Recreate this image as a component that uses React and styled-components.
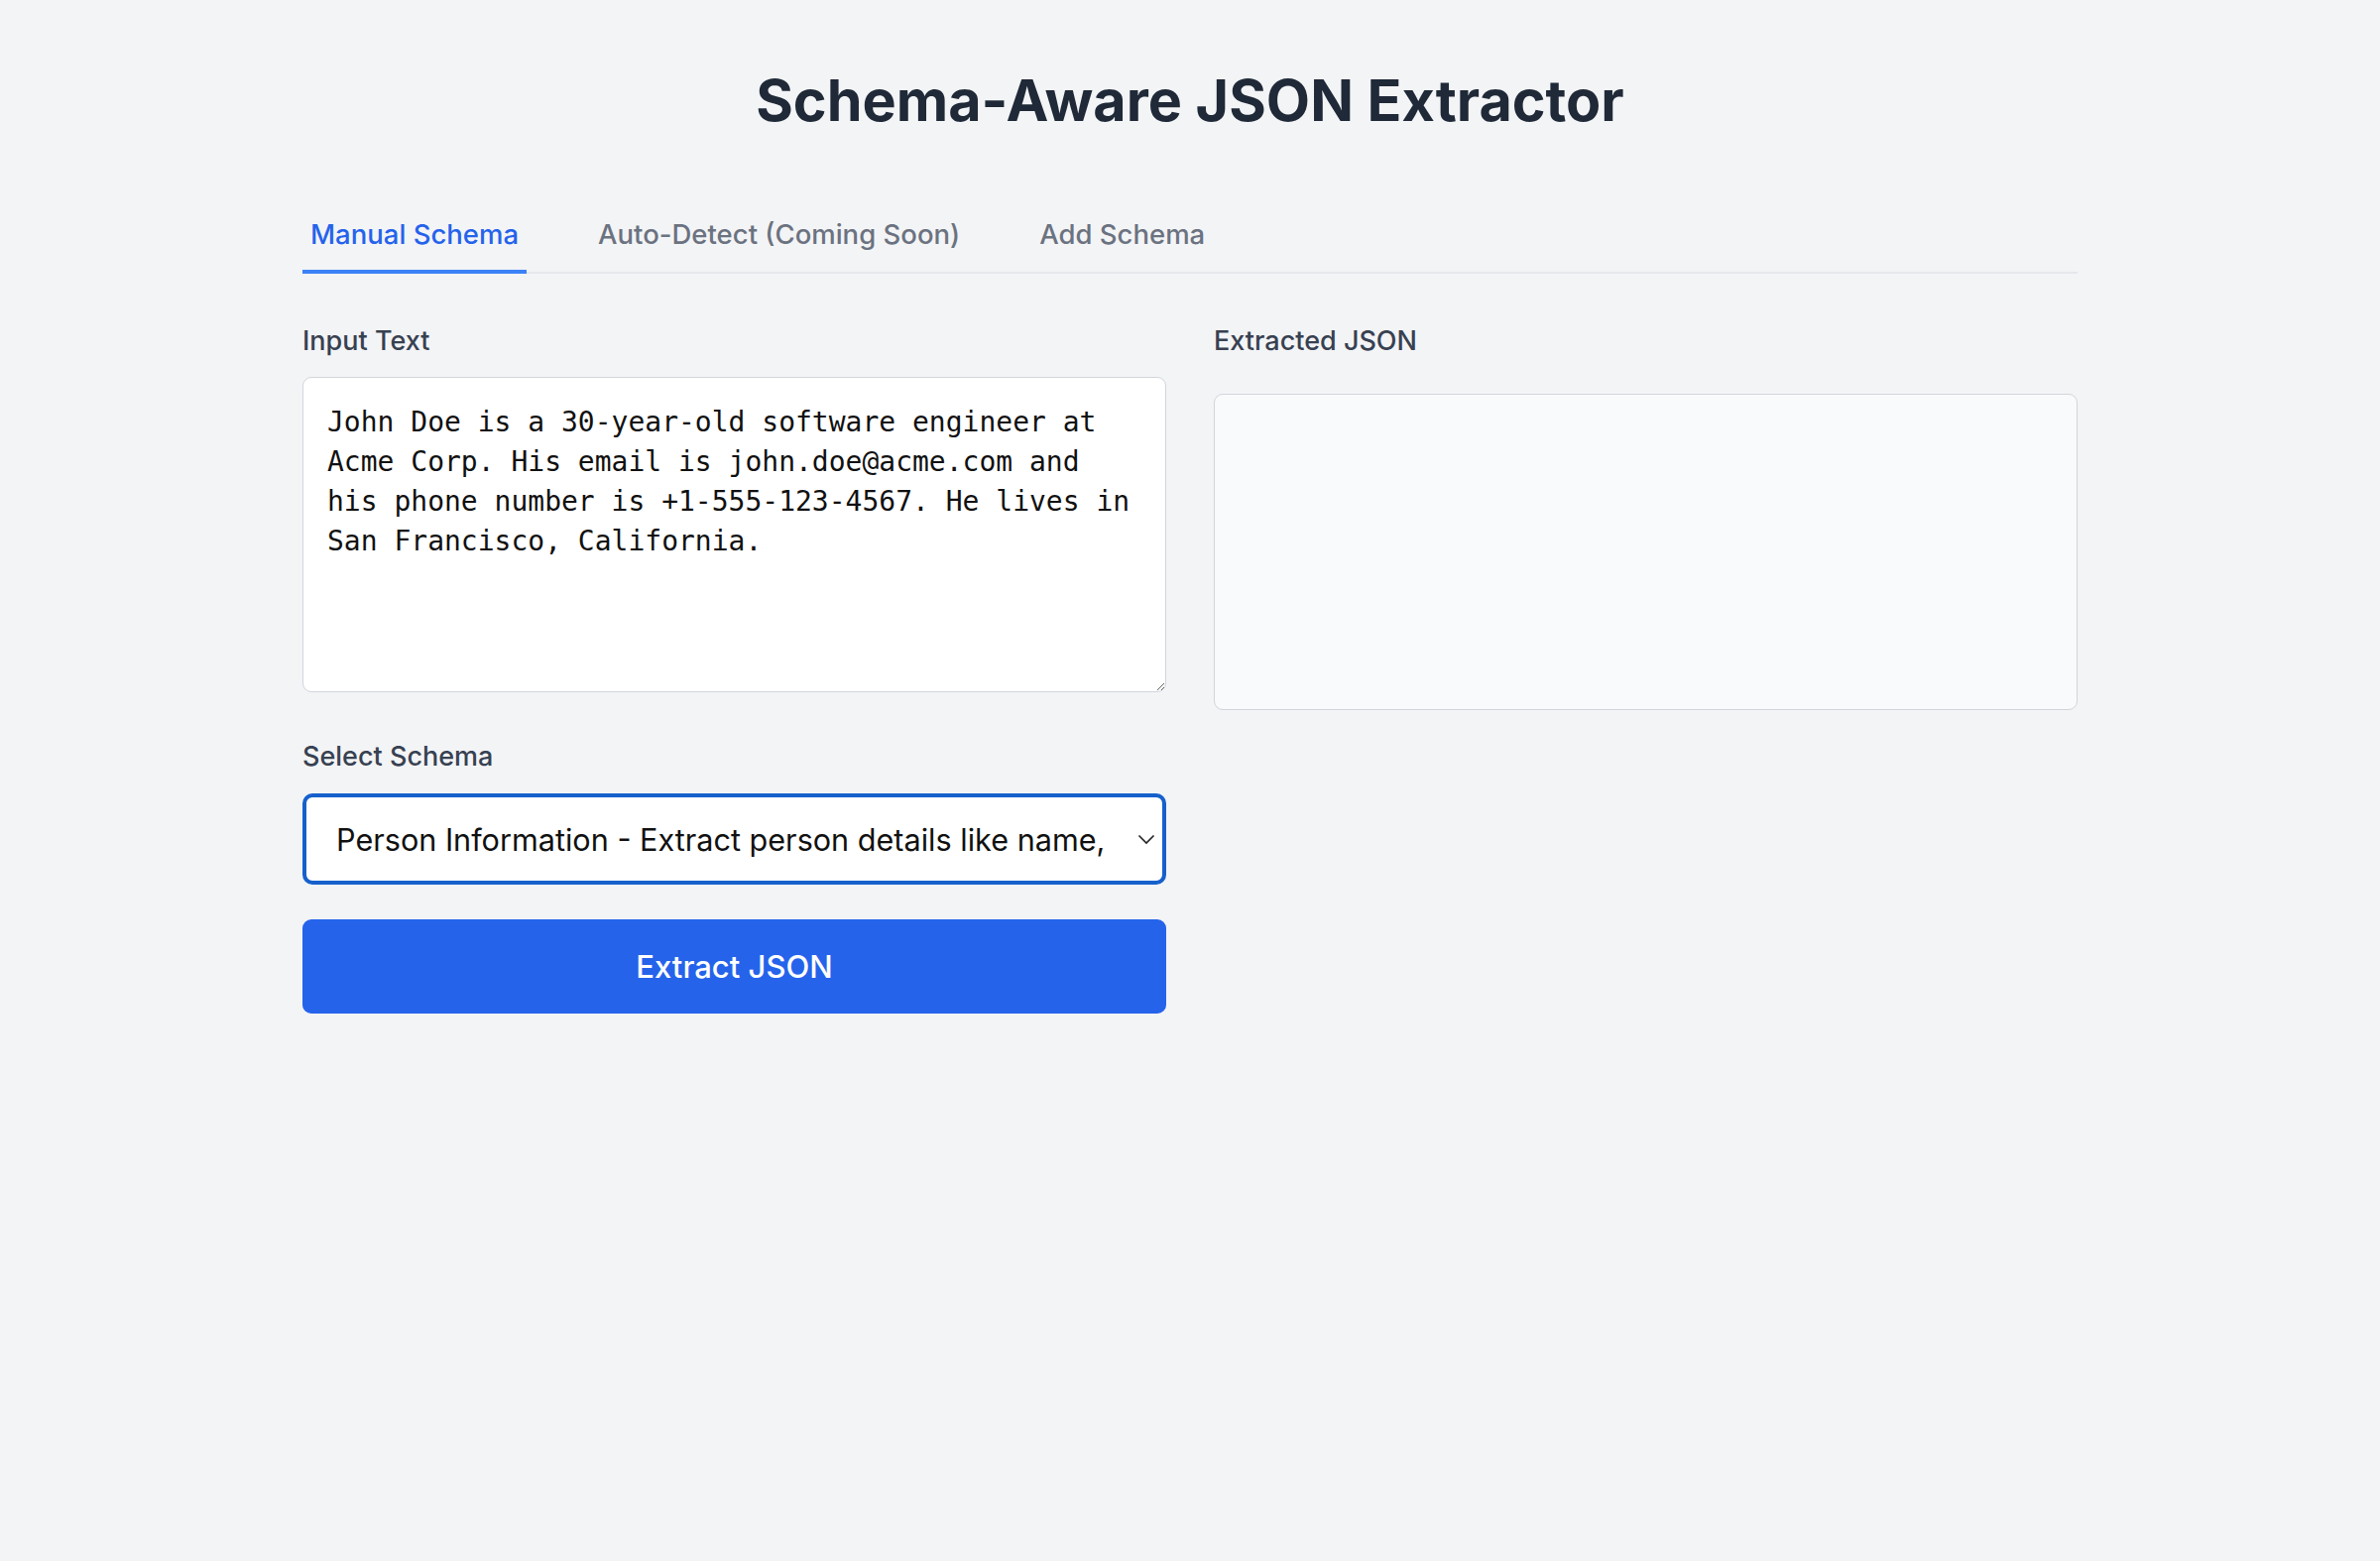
import React from 'react';
import styled, { createGlobalStyle } from "styled-components";

const GlobalStyle = createGlobalStyle`
	html, body {
		margin: 0;
		padding: 0;
		background: #f3f4f6;
	}
	body {
		font-family: Inter, "Noto Sans", "Liberation Sans", sans-serif;
		color: #1f2937;
	}
	* {
		box-sizing: border-box;
	}
`;

const Page = styled.div`
	min-height: 1574px;
	padding-top: 67px;
`;

const Wrapper = styled.div`
	width: 1790px;
	margin: 0 auto;
`;

const Title = styled.h1`
	margin: 0 0 62px;
	font-size: 57.5px;
	line-height: 68px;
	font-weight: 700;
	text-align: center;
	color: #1f2937;
`;

const Tabs = styled.nav`
	display: flex;
	gap: 64px;
	border-bottom: 2px solid #e5e7eb;
`;

const Tab = styled.button`
	margin-bottom: -2px;
	padding: 20px 8px 16px;
	border: none;
	border-bottom: 4px solid ${(props) => (props.active ? "#3b82f6" : "transparent")};
	background: none;
	font-family: inherit;
	font-size: 27.5px;
	line-height: 39px;
	font-weight: 500;
	color: ${(props) => (props.active ? "#2563eb" : "#6b7280")};
	cursor: pointer;
`;

const Grid = styled.div`
	display: grid;
	grid-template-columns: minmax(0, 1fr) minmax(0, 1fr);
	column-gap: 48px;
	margin-top: 48px;
`;

const Column = styled.div`
	display: flex;
	flex-direction: column;
	min-width: 0;
`;

const Label = styled.label`
	display: block;
	font-size: 27px;
	line-height: 40px;
	font-weight: 500;
	color: #374151;
	margin-top: ${(props) => props.top || "0px"};
`;

const TextArea = styled.textarea`
	display: block;
	width: 100%;
	height: 318px;
	margin-top: 16px;
	padding: 25px 24px 22px;
	border: 1.5px solid #d1d5db;
	border-radius: 9px;
	background: #ffffff;
	font-family: "DejaVu Sans Mono", "Liberation Mono", monospace;
	font-size: 28px;
	line-height: 40px;
	color: #111111;
	outline: none;
`;

const Select = styled.div`
	display: flex;
	align-items: center;
	height: 92px;
	margin-top: 17px;
	padding: 0 7px 0 30px;
	border: 4px solid #1660cc;
	border-radius: 10px;
	background: #ffffff;
	font-size: 30.6px;
	color: #111111;
	white-space: nowrap;
`;

const SelectText = styled.span`
	flex: 1;
	overflow: hidden;
`;

const Chevron = styled.svg`
	width: 18px;
	height: 12px;
	margin-left: 34px;
	flex-shrink: 0;
`;

const Button = styled.button`
	width: 100%;
	height: 95px;
	margin-top: 35px;
	border: none;
	border-radius: 9px;
	background: #2563eb;
	color: #ffffff;
	font-family: inherit;
	font-size: 31px;
	font-weight: 500;
	cursor: pointer;
`;

const Output = styled.pre`
	height: 319px;
	margin: 33px 0 0;
	padding: 24px;
	border: 1.5px solid #d1d5db;
	border-radius: 9px;
	background: #f9fafb;
	font-family: "DejaVu Sans Mono", "Liberation Mono", monospace;
	font-size: 24px;
`;

const sampleText =
	"John Doe is a 30-year-old software engineer at Acme Corp. His email is john.doe@acme.com and his phone number is +1-555-123-4567. He lives in San Francisco, California.";

const App = () => {
	return (
		<Page>
			<GlobalStyle />
			<Wrapper>
				<Title>Schema-Aware JSON Extractor</Title>
				<Tabs>
					<Tab active>Manual Schema</Tab>
					<Tab>Auto-Detect (Coming Soon)</Tab>
					<Tab>Add Schema</Tab>
				</Tabs>
				<Grid>
					<Column>
						<Label>Input Text</Label>
						<TextArea defaultValue={sampleText} spellCheck={false} />
						<Label top="45px">Select Schema</Label>
						<Select>
							<SelectText>Person Information - Extract person details like name, email, phone</SelectText>
							<Chevron viewBox="0 0 18 12">
								<path d="M1.5 2.5l7.5 7.5 7.5-7.5" fill="none" stroke="#222" strokeWidth="1.6" />
							</Chevron>
						</Select>
						<Button>Extract JSON</Button>
					</Column>
					<Column>
						<Label>Extracted JSON</Label>
						<Output />
					</Column>
				</Grid>
			</Wrapper>
		</Page>
	);
};

export default App;
